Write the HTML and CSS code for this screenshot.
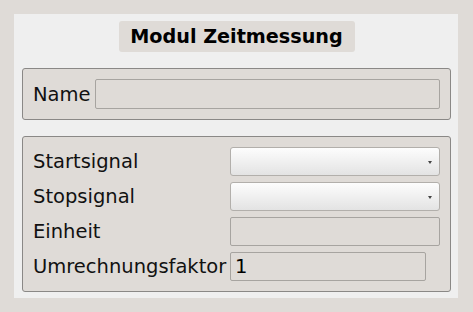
FILE: index.html
```html
<!DOCTYPE html>
<html>
<head>
<meta charset="utf-8">
<link rel="stylesheet" href="styles.css">
</head>
<body>
<div class="panel">
  <div class="title-row"><div class="title">Modul Zeitmessung</div></div>
  <div class="group group-name">
    <span class="label">Name</span>
    <div class="field grow"></div>
  </div>
  <div class="group grid">
    <span class="label">Startsignal</span>
    <div class="combo"><span class="arrow"></span></div>
    <span class="label">Stopsignal</span>
    <div class="combo"><span class="arrow"></span></div>
    <span class="label">Einheit</span>
    <div class="field"></div>
    <span class="label">Umrechnungsfaktor</span>
    <div class="field short">1</div>
  </div>
</div>
</body>
</html>
```
FILE: styles.css
```css
* { box-sizing: border-box; }
body {
  margin: 0;
  background: #dfdbd7;
  font-family: "DejaVu Sans", sans-serif;
  font-size: 19.5px;
  color: #111;
}
.panel {
  margin: 14px 0 0 14px;
  width: 444px;
  height: 284px;
  background: #efefef;
  padding: 7px 7px 6px 8px;
}
.title-row {
  display: flex;
  justify-content: center;
}
.title {
  background: #dfdbd7;
  border-radius: 3px;
  height: 31px;
  width: 236px;
  text-align: center;
  font-weight: bold;
  font-size: 19.2px;
  line-height: 31px;
  color: #000;
}
.group {
  margin-top: 16px;
  border: 1px solid #8a8886;
  border-radius: 3px;
  background: #dfdbd7;
  padding: 10px;
}
.group-name {
  display: flex;
  align-items: center;
  gap: 4px;
  height: 52px;
}
.grow { flex: 1; }
.label { line-height: 29px; white-space: nowrap; }
.field {
  height: 30px;
  border: 1px solid #a7a4a0;
  border-radius: 2px;
  background: #dfdbd7;
  padding-left: 4px;
  line-height: 28px;
  color: #000;
}
.grid {
  margin-top: 16px;
  display: grid;
  grid-template-columns: 192px 210px;
  grid-auto-rows: 29px;
  column-gap: 5px;
  row-gap: 6px;
  height: 156px;
}
.grid .field { height: 29px; }
.short { width: 196px; }
.combo {
  position: relative;
  height: 29px;
  border: 1px solid #b2afab;
  border-radius: 3px;
  background: linear-gradient(#fdfdfd, #e3e3e3);
}
.arrow {
  position: absolute;
  right: 7px;
  top: 13px;
  width: 0;
  height: 0;
  border-left: 2.5px solid transparent;
  border-right: 2.5px solid transparent;
  border-top: 3px solid #444;
}
```
